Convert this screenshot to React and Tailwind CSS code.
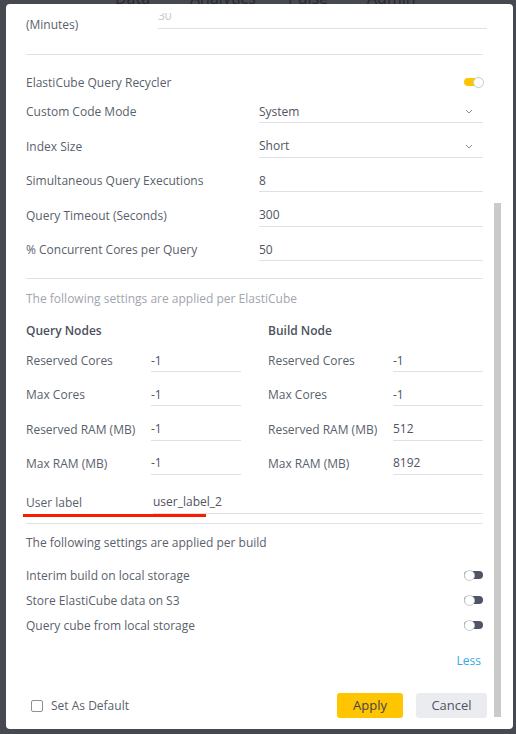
import React from 'react';

const font = { fontFamily: '"Open Sans", "Liberation Sans", sans-serif' };

const Toggle = ({ on }) => (
  <div className="relative w-[19px] h-[11px] flex items-center">
    <div className={`w-full h-[8px] rounded-full ${on ? 'bg-[#fec400]' : 'bg-[#4f5466]'}`} />
    <div
      className={`absolute top-0 w-[11px] h-[11px] rounded-full bg-white border border-[#c8cad0] ${on ? 'right-[-1px]' : 'left-0'}`}
    />
  </div>
);

const Chevron = () => (
  <svg width="8" height="5" viewBox="0 0 8 5" fill="none" className="mr-[10px]">
    <path d="M1 1l3 3 3-3" stroke="#8a8f9a" strokeWidth="1" />
  </svg>
);

// Label on the left, underlined value on the right
const FieldRow = ({ label, value, select }) => (
  <div className="flex items-center h-[24px] pt-[2px]">
    <div className="w-[233px] text-[12px] text-[#5a5f6c]">{label}</div>
    <div className="flex-1 h-full flex items-center justify-between border-b border-[#dfe1e6] text-[12px] text-[#4f5463]">
      <span>{value}</span>
      {select && <Chevron />}
    </div>
  </div>
);

const NodeField = ({ label, value }) => (
  <div className="flex items-center h-[24px] pt-[2px]">
    <div className="w-[125px] text-[12px] text-[#5a5f6c]">{label}</div>
    <div className="flex-1 h-full flex items-center border-b border-[#dfe1e6] text-[12px] text-[#4f5463]">
      {value}
    </div>
  </div>
);

const ToggleRow = ({ label, on }) => (
  <div className="flex items-center justify-between h-[25px]">
    <span className="text-[12px] text-[#5a5f6c] pt-[2px]">{label}</span>
    <Toggle on={on} />
  </div>
);

const queryNodes = [
  ['Reserved Cores', '-1'],
  ['Max Cores', '-1'],
  ['Reserved RAM (MB)', '-1'],
  ['Max RAM (MB)', '-1'],
];

const buildNode = [
  ['Reserved Cores', '-1'],
  ['Max Cores', '-1'],
  ['Reserved RAM (MB)', '512'],
  ['Max RAM (MB)', '8192'],
];

export default function App() {
  return (
    <div className="relative w-[516px] h-[734px] overflow-hidden bg-[#464950] pt-[4px] pl-[6px]" style={font}>
      {/* top nav behind the overlay */}
      <div className="absolute top-[-13px] left-0 flex text-[16px] text-[#26282d] leading-[22px]">
        <span className="absolute left-[115px]">Data</span>
        <span className="absolute left-[190px]">Analytics</span>
        <span className="absolute left-[288px]">Pulse</span>
        <span className="absolute left-[367px]">Admin</span>
      </div>

      {/* modal */}
      <div className="relative w-[507px] h-[725px] bg-white rounded-[4px] flex flex-col">
        <div className="h-[667px] mt-[9px] overflow-hidden pl-[20px] pr-[30px]">
          <div className="mt-[-15px]">
            {/* recycle timeout */}
            <div className="flex items-start h-[34px]">
              <div className="w-[132px] pt-[18px] text-[12px] leading-[17px] text-[#5a5f6c]">(Minutes)</div>
              <div className="flex-1 mr-[-4px] h-[31px] flex items-end pb-[4px] border-b border-[#dfe1e6] text-[12px] leading-[17px] text-[#c5c8ce]">
                30
              </div>
            </div>

            <div className="mt-[22px] h-px bg-[#e1e3e7]" />

            <div className="mt-[17px] flex items-center justify-between h-[20px]">
              <span className="text-[12px] text-[#5a5f6c] pt-[2px]">ElastiCube Query Recycler</span>
              <Toggle on />
            </div>

            <div className="mt-[7px] flex flex-col gap-[10.5px]">
              <FieldRow label="Custom Code Mode" value="System" select />
              <FieldRow label="Index Size" value="Short" select />
              <FieldRow label="Simultaneous Query Executions" value="8" />
              <FieldRow label="Query Timeout (Seconds)" value="300" />
              <FieldRow label="% Concurrent Cores per Query" value="50" />
            </div>

            <div className="mt-[17px] h-px bg-[#e1e3e7]" />

            <div className="mt-[10.5px] text-[12px] leading-[17px] text-[#a1a5ae]">
              The following settings are applied per ElastiCube
            </div>

            <div className="mt-[15px] grid grid-cols-2 gap-x-[27px] text-[12px] leading-[17px] font-semibold text-[#4c5160]">
              <div>Query Nodes</div>
              <div>Build Node</div>
            </div>

            <div className="mt-[9.5px] grid grid-cols-2 gap-x-[27px]">
              <div className="flex flex-col gap-[10.3px]">
                {queryNodes.map(([l, v]) => (
                  <NodeField key={l} label={l} value={v} />
                ))}
              </div>
              <div className="flex flex-col gap-[10.3px]">
                {buildNode.map(([l, v]) => (
                  <NodeField key={l} label={l} value={v} />
                ))}
              </div>
            </div>

            <div className="mt-[15px] flex items-center h-[24px] pt-[2px]">
              <div className="w-[127px] text-[12px] text-[#5a5f6c]">User label</div>
              <div className="flex-1 h-full flex items-center border-b border-[#dfe1e6] text-[12px] text-[#4f5463]">
                user_label_2
              </div>
            </div>

            <div className="mt-[9px] h-px bg-[#e1e3e7]" />

            <div className="mt-[10px] text-[12px] leading-[17px] text-[#5a5f6c]">
              The following settings are applied per build
            </div>

            <div className="mt-[12px]">
              <ToggleRow label="Interim build on local storage" />
              <ToggleRow label="Store ElastiCube data on S3" />
              <ToggleRow label="Query cube from local storage" />
            </div>

            <div className="mt-[14px] flex justify-end pr-[2px] text-[12px] leading-[17px] text-[#35a9e5]">
              Less
            </div>
          </div>
        </div>

        {/* footer */}
        <div className="mt-[13px] flex items-center justify-between pl-[25px] pr-[26px]">
          <label className="flex items-center gap-2 text-[12px] text-[#5a5f6c]">
            <span className="w-[12px] h-[12px] rounded-[2px] border-[1.5px] border-[#8c909a]" />
            <span className="pt-px">Set As Default</span>
          </label>
          <div className="flex gap-[13px]">
            <button className="w-[66px] h-[25px] pt-px rounded-[3px] bg-[#fec500] text-[13px] text-[#3e4350]">Apply</button>
            <button className="w-[71px] h-[25px] pt-px rounded-[3px] bg-[#ebecf0] text-[13px] text-[#4f5463]">Cancel</button>
          </div>
        </div>

        {/* scrollbar thumb */}
        <div className="absolute left-[488px] top-[199px] w-[7px] h-[514px] bg-[#cacaca]" />
      </div>

      {/* red underline mark on the user label row */}
      <div className="absolute left-[23px] top-[514px] w-[183px] h-[3px] bg-[#f51f00]" />
    </div>
  );
}
